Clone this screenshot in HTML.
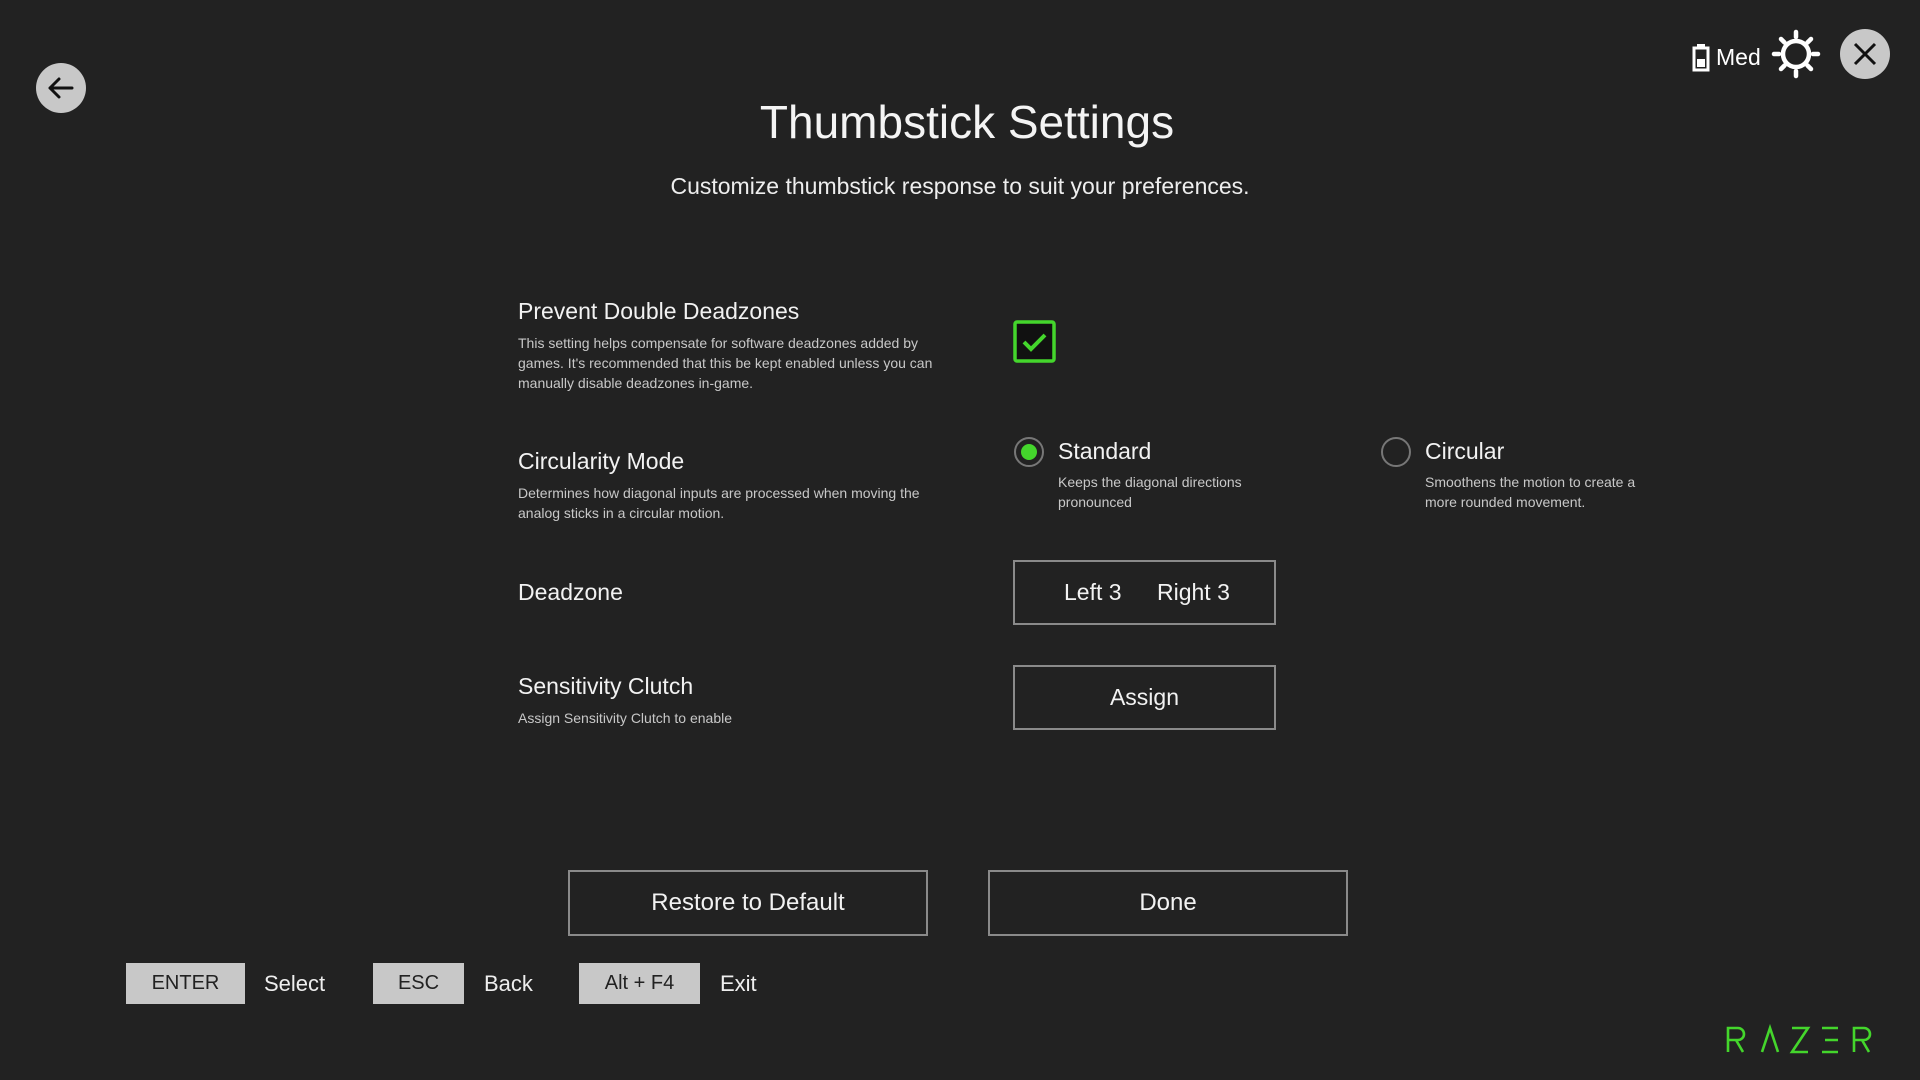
<!DOCTYPE html>
<html><head><meta charset="utf-8"><style>
*{margin:0;padding:0;box-sizing:border-box}
body{width:1920px;height:1080px;background:#222222;color:#fff;font-family:"Liberation Sans",sans-serif;position:relative;overflow:hidden}
.a{position:absolute;white-space:nowrap}
.h{font-size:23px;color:#f2f2f2}
.d{font-size:14px;color:#c8c8c8;line-height:20px;white-space:normal}
.box{position:absolute;border:2px solid #8a8a8a;display:flex;align-items:center;justify-content:center;font-size:23px;color:#f2f2f2}
.key{position:absolute;background:#c8c8c8;color:#222;font-size:20px;display:flex;align-items:center;justify-content:center;height:41px;top:963px}
.kl{position:absolute;top:971px;font-size:22px;color:#eee}
</style></head><body>
<svg class="a" style="left:36px;top:63px" width="50" height="50" viewBox="0 0 50 50"><circle cx="25" cy="25" r="25" fill="#c8c8c8"/><path d="M36 25H14M23 16l-9 9 9 9" stroke="#111" stroke-width="3" fill="none" stroke-linecap="round" stroke-linejoin="round"/></svg>
<svg class="a" style="left:1692px;top:44px" width="18" height="28" viewBox="0 0 18 28"><rect x="5" y="0" width="8" height="4" fill="#fff"/><rect x="2" y="4" width="14" height="22" fill="none" stroke="#fff" stroke-width="3"/><rect x="5" y="15" width="8" height="8" fill="#fff"/></svg>
<div class="a" style="left:1716px;top:44px;font-size:23px">Med</div>
<svg class="a" style="left:1770px;top:28px" width="52" height="52" viewBox="0 0 52 52"><g stroke="#fff" stroke-width="4.5" stroke-linecap="round" fill="none"><circle cx="26" cy="26" r="13"/><path d="M26 4v5M26 43v5M4 26h5M43 26h5M11 11l3.5 3.5M37.5 37.5l3.5 3.5M41 11l-3.5 3.5M11 41l3.5-3.5"/></g></svg>
<svg class="a" style="left:1840px;top:29px" width="50" height="50" viewBox="0 0 50 50"><circle cx="25" cy="25" r="25" fill="#c8c8c8"/><path d="M15 15l20 20M35 15L15 35" stroke="#111" stroke-width="3"/></svg>
<div class="a" style="left:0;width:1934px;text-align:center;top:95px;font-size:46px;color:#f4f4f4">Thumbstick Settings</div>
<div class="a" style="left:0;width:1920px;text-align:center;top:173px;font-size:23px;color:#eee">Customize thumbstick response to suit your preferences.</div>

<div class="a h" style="left:518px;top:298px">Prevent Double Deadzones</div>
<div class="a d" style="left:518px;top:333px;width:430px">This setting helps compensate for software deadzones added by games. It's recommended that this be kept enabled unless you can manually disable deadzones in-game.</div>
<svg class="a" style="left:1013px;top:320px" width="43" height="43" viewBox="0 0 43 43"><rect x="2" y="2" width="39" height="39" rx="2" fill="#111" stroke="#44d62c" stroke-width="3.5"/><path d="M11 22l7 7 14-14" stroke="#44d62c" stroke-width="4" fill="none"/></svg>

<div class="a h" style="left:518px;top:448px">Circularity Mode</div>
<div class="a d" style="left:518px;top:483px;width:440px">Determines how diagonal inputs are processed when moving the analog sticks in a circular motion.</div>
<svg class="a" style="left:1013px;top:436px" width="32" height="32"><circle cx="16" cy="16" r="14" fill="none" stroke="#777" stroke-width="2"/><circle cx="16" cy="16" r="8" fill="#44d62c"/></svg>
<div class="a h" style="left:1058px;top:438px">Standard</div>
<div class="a d" style="left:1058px;top:472px;width:240px">Keeps the diagonal directions pronounced</div>
<svg class="a" style="left:1380px;top:436px" width="32" height="32"><circle cx="16" cy="16" r="14" fill="none" stroke="#777" stroke-width="2"/></svg>
<div class="a h" style="left:1425px;top:438px">Circular</div>
<div class="a d" style="left:1425px;top:472px;width:240px">Smoothens the motion to create a more rounded movement.</div>

<div class="a h" style="left:518px;top:579px">Deadzone</div>
<div class="box" style="left:1013px;top:560px;width:263px;height:65px"><span style="position:absolute;left:49px">Left 3</span><span style="position:absolute;left:142px">Right 3</span></div>

<div class="a h" style="left:518px;top:673px">Sensitivity Clutch</div>
<div class="a d" style="left:518px;top:708px">Assign Sensitivity Clutch to enable</div>
<div class="box" style="left:1013px;top:665px;width:263px;height:65px">Assign</div>

<div class="box" style="left:568px;top:870px;width:360px;height:66px;font-size:24px">Restore to Default</div>
<div class="box" style="left:988px;top:870px;width:360px;height:66px;font-size:24px">Done</div>

<div class="key" style="left:126px;width:119px">ENTER</div><div class="kl" style="left:264px">Select</div>
<div class="key" style="left:373px;width:91px">ESC</div><div class="kl" style="left:484px">Back</div>
<div class="key" style="left:579px;width:121px">Alt + F4</div><div class="kl" style="left:720px">Exit</div>

<svg class="a" style="left:1726px;top:1024px" width="150" height="32" viewBox="0 0 150 32"><g stroke="#44d62c" stroke-width="2.6" fill="none"><path d="M2 28V4h10a6 6 0 0 1 0 12H2M10 16l7 12"/><path d="M36 28l8-24 8 24"/><path d="M66 4h16L66 28h16"/><path d="M96 4h16M99 16h13M96 28h16"/><path d="M128 28V4h10a6 6 0 0 1 0 12h-10M136 16l7 12"/></g></svg>
</body></html>
